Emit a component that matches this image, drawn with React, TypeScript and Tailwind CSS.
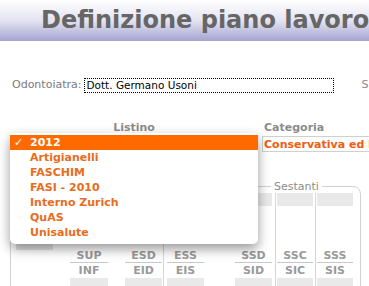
import React from 'react'

const listini = ['2012', 'Artigianelli', 'FASCHIM', 'FASI - 2010', 'Interno Zurich', 'QuAS', 'Unisalute']

function Cell({ top, bottom }: { top: string; bottom: string }) {
  return (
    <div className="flex flex-col w-full">
      <div className="h-[13px] bg-[#e9e9e9]" />
      <div className="h-[42px]" />
      <div className="h-[15px] border-b border-[#c8c8c8] flex items-center justify-center font-bold text-[11px] text-[#9a9a9a] leading-none">
        {top}
      </div>
      <div className="h-[14px] flex items-center justify-center font-bold text-[11px] text-[#9a9a9a] leading-none">
        {bottom}
      </div>
      <div className="mt-[1px] h-[13px] bg-[#e9e9e9]" />
    </div>
  )
}

export default function App() {
  return (
    <div className="relative w-[369px] h-[286px] overflow-hidden bg-white font-['DejaVu_Sans',sans-serif]">
      {/* header */}
      <div className="h-[41px] bg-gradient-to-b from-white via-[#e4e4f2] to-[#a4a4d0] pl-[41px] pt-[5px]">
        <h1 className="text-[24px] leading-[30px] font-bold text-[#666666] whitespace-nowrap">Definizione piano lavoro</h1>
      </div>

      {/* odontoiatra */}
      <div className="mt-[37px] h-[15px] flex items-center pl-[12px] text-[11px] whitespace-nowrap">
        <span className="text-[#7a7a7a]">Odontoiatra:</span>
        <div className="ml-[3px] w-[250px] shrink-0 h-[15px] border border-dotted border-black flex items-center px-[1px] text-[10.5px] text-black leading-none">
          Dott. Germano Usoni
        </div>
        <span className="ml-[27px] text-[#8a8a8a]">S</span>
      </div>

      {/* listino / categoria */}
      <div className="mt-[28px] h-[13px] flex items-center text-[11px] font-bold text-[#8c8c8c] leading-none">
        <div className="ml-[10px] w-[248px] shrink-0 text-center">Listino</div>
        <div className="ml-[6px]">Categoria</div>
      </div>
      <div className="mt-[2px] h-[16px] flex">
        <div className="ml-[10px] w-[248px] shrink-0 border border-[#cccccc]" />
        <div className="ml-[4px] w-[108px] shrink-0 overflow-hidden border-y border-l border-[#d0d0d0] flex items-center pl-[1px] text-[11px] font-bold text-[#ec5e10] leading-none whitespace-nowrap">
          Conservativa ed E
        </div>
      </div>

      {/* sestanti */}
      <fieldset className="mt-[28px] ml-[10px] w-[351px] h-[140px] border border-[#d2d2d2] rounded-[8px]">
        <legend className="ml-[260px] px-[3px] text-[11px] leading-[13px] text-[#8c8c8c]">Sestanti</legend>
        <div className="flex pl-[5px]">
          <div className="w-[37px] flex flex-col">
            <div className="h-[13px] bg-[#e9e9e9]" />
            <div className="mt-[31px] h-[13px] bg-[#e4e4e4]" />
          </div>
          <div className="ml-[17px] w-[38px] flex">
            <Cell top="SUP" bottom="INF" />
          </div>
          <div className="ml-[17px] w-[39px] pr-[1px] border-r border-[#d6d6d6] flex">
            <Cell top="ESD" bottom="EID" />
          </div>
          <div className="ml-[3px] w-[37px] flex">
            <Cell top="ESS" bottom="EIS" />
          </div>
          <div className="ml-[31px] w-[41px] pr-[3px] border-r border-[#d6d6d6] flex">
            <Cell top="SSD" bottom="SID" />
          </div>
          <div className="ml-[1px] w-[39px] pr-[2px] border-r border-[#d6d6d6] flex">
            <Cell top="SSC" bottom="SIC" />
          </div>
          <div className="ml-[1px] w-[36px] flex">
            <Cell top="SSS" bottom="SIS" />
          </div>
        </div>
      </fieldset>

      {/* open listino menu */}
      <div className="absolute left-[10px] top-[133px] w-[248px] h-[111px] bg-white rounded-[5px] pt-[2px] shadow-[0_5px_12px_rgba(0,0,0,0.4)]">
        {listini.map((item, i) => (
          <div
            key={item}
            className={`h-[15px] flex items-center text-[11px] font-bold leading-none whitespace-nowrap ${
              i === 0 ? 'bg-[#ff6a00] text-white' : 'text-[#e86c1c]'
            }`}
          >
            <span className="w-[20px] pl-[4px] font-normal">{i === 0 ? '✓' : ''}</span>
            {item}
          </div>
        ))}
      </div>
    </div>
  )
}
